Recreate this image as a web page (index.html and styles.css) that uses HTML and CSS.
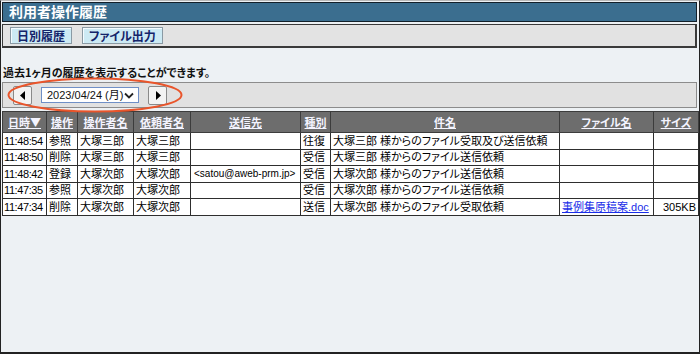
FILE: index.html
```html
<!DOCTYPE html>
<html lang="ja">
<head>
<meta charset="utf-8">
<title>利用者操作履歴</title>
<link rel="stylesheet" href="styles.css">
</head>
<body>
<div class="frame">
  <div class="titlebar">利用者操作履歴</div>
  <div class="toolbar">
    <span class="tbtn">日別履歴</span>
    <span class="tbtn">ファイル出力</span>
  </div>
  <p class="desc">過去1ヶ月の履歴を表示することができます。</p>
  <div class="nav">
    <span class="navbtn"><svg width="6" height="9" viewBox="0 0 6 9"><path d="M5 0 L0 4.5 L5 9 Z" fill="#000"/></svg></span>
    <span class="datesel"><span class="dtxt">2023/04/24 (月)</span><svg width="10" height="7" viewBox="0 0 10 7"><path d="M1 1.5 L5 5.5 L9 1.5" fill="none" stroke="#222" stroke-width="1.8"/></svg></span>
    <span class="navbtn"><svg width="6" height="9" viewBox="0 0 6 9"><path d="M1 0 L6 4.5 L1 9 Z" fill="#000"/></svg></span>
    <svg class="ring" width="180" height="40" viewBox="0 0 180 40"><ellipse cx="90" cy="19" rx="86.5" ry="16.5" fill="none" stroke="#e9552b" stroke-width="2"/></svg>
  </div>
  <table class="log">
    <colgroup>
      <col style="width:44px"><col style="width:31px"><col style="width:56px"><col style="width:57px"><col style="width:110px"><col style="width:30px"><col style="width:229px"><col style="width:94px"><col style="width:45px">
    </colgroup>
    <thead>
      <tr>
        <th>日時▼</th><th>操作</th><th>操作者名</th><th>依頼者名</th><th>送信先</th><th>種別</th><th>件名</th><th>ファイル名</th><th>サイズ</th>
      </tr>
    </thead>
    <tbody>
      <tr><td>11:48:54</td><td>参照</td><td>大塚三郎</td><td>大塚三郎</td><td></td><td>往復</td><td>大塚三郎 様からのファイル受取及び送信依頼</td><td></td><td></td></tr>
      <tr><td>11:48:50</td><td>削除</td><td>大塚三郎</td><td>大塚三郎</td><td></td><td>受信</td><td>大塚三郎 様からのファイル送信依頼</td><td></td><td></td></tr>
      <tr><td>11:48:42</td><td>登録</td><td>大塚次郎</td><td>大塚次郎</td><td class="mail">&lt;satou@aweb-prm.jp&gt;</td><td>受信</td><td>大塚次郎 様からのファイル送信依頼</td><td></td><td></td></tr>
      <tr><td>11:47:35</td><td>参照</td><td>大塚次郎</td><td>大塚次郎</td><td></td><td>受信</td><td>大塚次郎 様からのファイル送信依頼</td><td></td><td></td></tr>
      <tr><td>11:47:34</td><td>削除</td><td>大塚次郎</td><td>大塚次郎</td><td></td><td>送信</td><td>大塚次郎 様からのファイル受取依頼</td><td><a class="flink" href="#">事例集原稿案.doc</a></td><td class="num">305KB</td></tr>
    </tbody>
  </table>
</div>
</body>
</html>
```

FILE: styles.css
```css
* { box-sizing: border-box; }
html, body { margin: 0; padding: 0; }
body {
  width: 700px;
  height: 354px;
  background: #edf1f4;
  font-family: "Liberation Sans", "Noto Sans CJK JP", sans-serif;
  font-feature-settings: "palt";
  color: #000;
}
.frame {
  width: 700px;
  height: 354px;
  border: 1px solid #222;
  border-top-color: #b8b8b8;
  border-bottom-width: 2px;
  padding: 1px 1px 0 1px;
  background: #edf1f4;
  display: flex;
  flex-direction: column;
}
.titlebar {
  height: 20px;
  background: #3b6e8f;
  border: 1px solid #13202a;
  color: #fff;
  font-family: "Noto Sans CJK JP", sans-serif;
  font-weight: bold;
  font-size: 14px;
  line-height: 17px;
  padding-left: 6px;
  margin-right: 1px;
}
.toolbar {
  margin-top: 2px;
  margin-right: 1px;
  height: 24px;
  background: #e3e3e3;
  border: 1px solid #3a3a3a;
  border-right-width: 2px;
  border-bottom-width: 2px;
  display: flex;
  align-items: center;
  gap: 10px;
  padding-left: 7px;
}
.tbtn {
  height: 17px;
  padding: 0 6px;
  background: #cdeaf4;
  border: 1px solid #8a9aa4;
  box-shadow: inset 1px 1px 0 #f4fbff;
  color: #14246a;
  font-family: "Noto Sans CJK JP", sans-serif;
  font-weight: bold;
  font-size: 12px;
  line-height: 15px;
}
.desc {
  margin: 17px 0 0 1px;
  font-family: "Noto Sans CJK JP", sans-serif;
  font-size: 11px;
  font-weight: bold;
  line-height: 14px;
  color: #111;
}
.nav {
  position: relative;
  margin-top: 3px;
  margin-right: 1px;
  height: 26px;
  background: #e1e1e1;
  border: 1px solid #8c8c8c;
  display: flex;
  align-items: center;
  padding-left: 10px;
  gap: 9px;
}
.navbtn {
  width: 19px;
  height: 19px;
  background: #f3f3f3;
  border: 1px solid #8a8a8a;
  border-radius: 2px;
  display: flex;
  align-items: center;
  justify-content: center;
}
.datesel {
  width: 98px;
  height: 16px;
  background: #fff;
  border: 1px solid #6f8fc6;
  display: flex;
  align-items: center;
  justify-content: space-between;
  padding: 0 4px 0 5px;
  font-size: 11px;
  line-height: 14px;
  color: #111;
}
.ring {
  position: absolute;
  left: 2px;
  top: -7px;
  pointer-events: none;
}
.log {
  margin-top: 3px;
  width: 697px;
  table-layout: fixed;
  border-collapse: collapse;
  background: #fff;
  font-size: 11px;
}
.log th {
  height: 21px;
  background: #6d6d6d;
  border: 1px solid #3c3c3c;
  color: #f4f4ff;
  font-family: "Noto Sans CJK JP", sans-serif;
  font-weight: bold;
  font-size: 11px;
  text-decoration: underline;
  padding: 0 2px;
  white-space: nowrap;
  overflow: hidden;
}
.log td {
  height: 16.5px;
  border: 1px solid #2e2e2e;
  padding: 0 2px;
  line-height: 14px;
  white-space: nowrap;
  overflow: hidden;
}
.log td:first-child { letter-spacing: -0.4px; padding: 0 1px; }
.log td.mail { font-size: 10px; padding-left: 3px; }
.log td.num { text-align: right; }
.flink { color: #1a2ee8; text-decoration: underline; }
```
